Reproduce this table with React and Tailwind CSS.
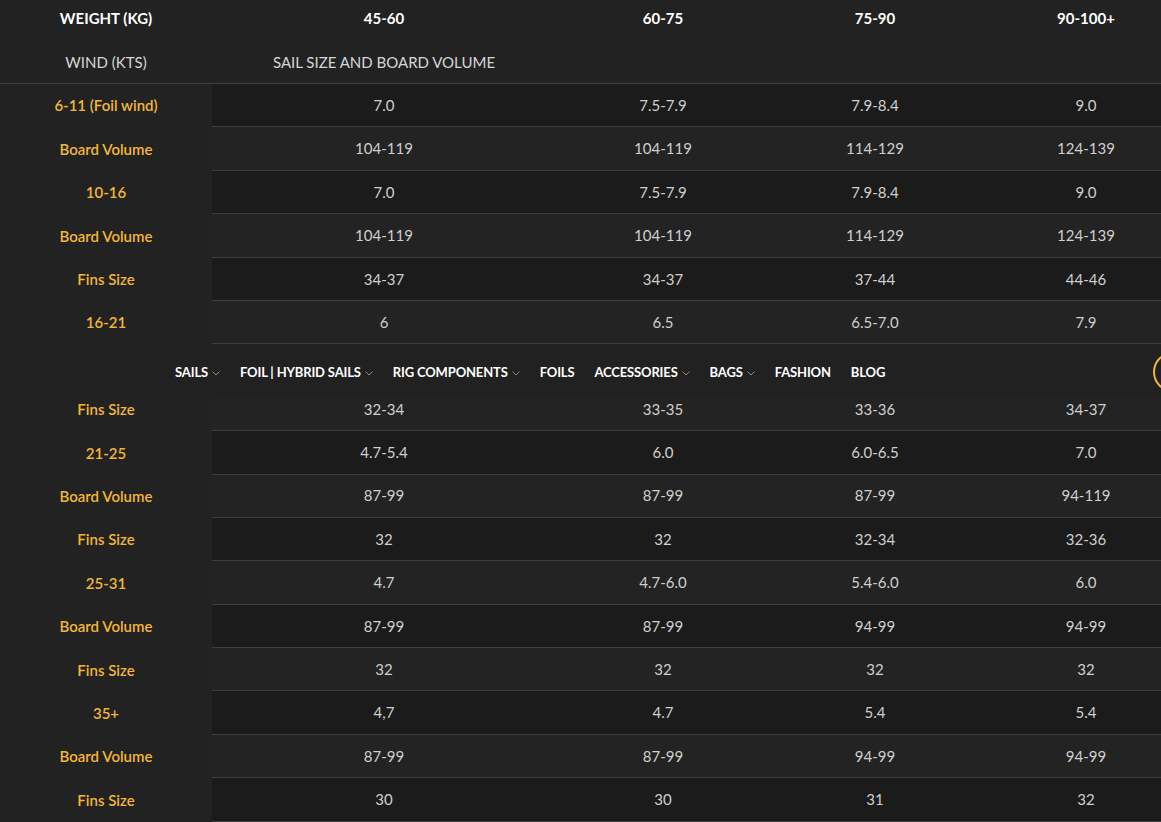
import React from "react";

const rows = [
  ["6-11 (Foil wind)", "7.0", "7.5-7.9", "7.9-8.4", "9.0"],
  ["Board Volume", "104-119", "104-119", "114-129", "124-139"],
  ["10-16", "7.0", "7.5-7.9", "7.9-8.4", "9.0"],
  ["Board Volume", "104-119", "104-119", "114-129", "124-139"],
  ["Fins Size", "34-37", "34-37", "37-44", "44-46"],
  ["16-21", "6", "6.5", "6.5-7.0", "7.9"],
  ["Board Volume", "94-109", "94-109", "104-119", "114-129"],
  ["Fins Size", "32-34", "33-35", "33-36", "34-37"],
  ["21-25", "4.7-5.4", "6.0", "6.0-6.5", "7.0"],
  ["Board Volume", "87-99", "87-99", "87-99", "94-119"],
  ["Fins Size", "32", "32", "32-34", "32-36"],
  ["25-31", "4.7", "4.7-6.0", "5.4-6.0", "6.0"],
  ["Board Volume", "87-99", "87-99", "94-99", "94-99"],
  ["Fins Size", "32", "32", "32", "32"],
  ["35+", "4,7", "4.7", "5.4", "5.4"],
  ["Board Volume", "87-99", "87-99", "94-99", "94-99"],
  ["Fins Size", "30", "30", "31", "32"],
];

const menu = [
  { label: "SAILS", drop: true },
  { label: "FOIL | HYBRID SAILS", drop: true },
  { label: "RIG COMPONENTS", drop: true },
  { label: "FOILS" },
  { label: "ACCESSORIES", drop: true },
  { label: "BAGS", drop: true },
  { label: "FASHION" },
  { label: "BLOG" },
];

function Chevron() {
  return (
    <svg width="8" height="5" viewBox="0 0 8 5" className="ml-[4px] mt-[1px]">
      <path d="M0.5 0.5 L4 4 L7.5 0.5" fill="none" stroke="#8a8a8a" strokeWidth="1" />
    </svg>
  );
}

function SizeChart() {
  return (
    <div className="w-[1192px] text-[15px]">
      <div className="flex h-[36px] items-center font-bold text-white">
        <div className="w-[212px] text-center">WEIGHT (KG)</div>
        <div className="w-[344px] text-center">45-60</div>
        <div className="w-[214px] text-center">60-75</div>
        <div className="w-[210px] text-center">75-90</div>
        <div className="w-[212px] text-center">90-100+</div>
      </div>
      <div className="flex h-[48px] items-center border-b border-[#414141] text-[#d6d6d6] pt-[6px]">
        <div className="w-[212px] text-center">WIND (KTS)</div>
        <div className="w-[344px] text-center">SAIL SIZE AND BOARD VOLUME</div>
      </div>
      {rows.map((row, i) => (
        <div key={i} className="flex h-[43.4px]">
          <div className="w-[212px] flex items-center justify-center font-semibold text-[#f2b634] bg-[#222222]">
            {/* row 7 sits under the sticky menu */}
            <span className={i === 6 ? "invisible" : ""}>{row[0]}</span>
          </div>
          <div
            className={
              "flex flex-1 items-center border-b border-[#3e3e3e] text-[#cfcfcf] " +
              (i % 2 === 0 ? "bg-[#1b1b1b]" : "bg-[#232323]") +
              (i === 6 ? " invisible" : "")
            }
          >
            <div className="w-[344px] text-center">{row[1]}</div>
            <div className="w-[214px] text-center">{row[2]}</div>
            <div className="w-[210px] text-center">{row[3]}</div>
            <div className="w-[212px] text-center">{row[4]}</div>
          </div>
        </div>
      ))}
    </div>
  );
}

export default function App() {
  return (
    <div
      className="relative h-[822px] w-full overflow-hidden bg-[#222222]"
      style={{ fontFamily: "Lato, 'Open Sans', sans-serif" }}
    >
      <SizeChart />

      {/* sticky menu over the table */}
      <div className="absolute left-0 right-0 top-[344px] h-[54px] bg-[#212121] flex items-center">
        <nav className="flex items-center gap-[20px] pl-[175px] pt-[4px] text-[13px] font-bold text-white tracking-[-0.15px]">
          {menu.map((m) => (
            <div key={m.label} className="flex items-center">
              <span>{m.label}</span>
              {m.drop && <Chevron />}
            </div>
          ))}
        </nav>
        <div className="absolute right-[-32px] top-[8px] h-[40px] w-[40px] rounded-full border-2 border-[#f2b634]" />
      </div>
    </div>
  );
}
